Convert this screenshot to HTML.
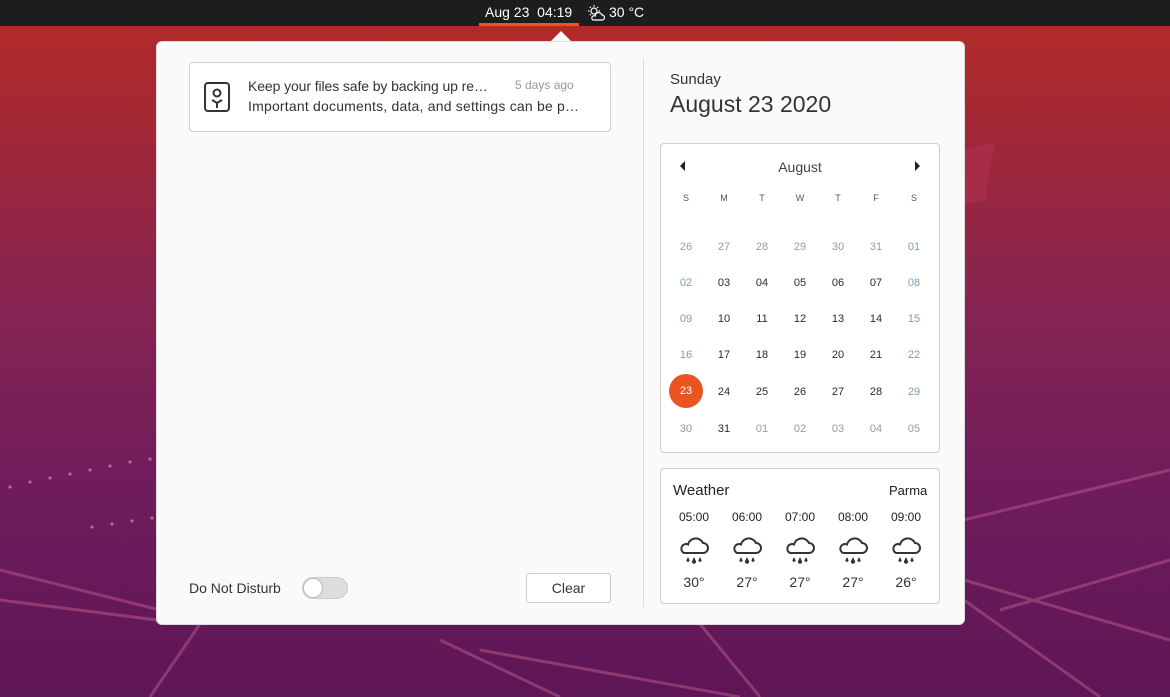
<!DOCTYPE html>
<html><head><meta charset="utf-8"><style>
*{margin:0;padding:0;box-sizing:border-box}
body{width:1170px;height:697px;overflow:hidden;position:relative;font-family:"Liberation Sans","DejaVu Sans",sans-serif;background:linear-gradient(180deg,#b52a25 0%,#a02837 20%,#852452 45%,#6f1c5c 70%,#5e1656 100%)}
.bar{position:absolute;left:0;top:0;width:1170px;height:26px;background:#1d1d1d;color:#fff;font-size:14px}
.abs{position:absolute}
.pop{position:absolute;left:157px;top:42px;width:807px;height:582px;background:#fafafa;border-radius:5px;box-shadow:0 0 0 1px #ddd}
.arrow{position:absolute;left:549px;top:31px;width:0;height:0;border-left:12px solid transparent;border-right:12px solid transparent;border-bottom:12px solid #fafafa}
.card{position:absolute;background:#fff;border:1px solid #cfcfcf;border-radius:4px}
.d{position:absolute;width:30px;text-align:center;font-size:11px;color:#2a2a2a}
.o{color:#9a9a9a}.w{color:#7d9cb3}
</style></head><body>
<svg class="abs" style="left:0;top:0" width="1170" height="697">
<g stroke="#c05a8a" stroke-width="3" opacity="0.5" fill="none">
<path d="M0 570 L160 610 M0 600 L157 620 M964 520 L1170 470 M964 580 L1170 640 M964 600 L1100 697 M200 624 L150 697 M440 640 L560 697 M480 650 L740 697 M700 624 L760 697 M1000 610 L1170 560"/>
</g>
<path d="M964 150 L995 142 L985 200 L964 205Z" fill="#b03050" opacity="0.6"/>
<g fill="#d08ab0" opacity="0.7"><circle cx="10" cy="487" r="1.6"/><circle cx="30" cy="482" r="1.6"/><circle cx="50" cy="478" r="1.6"/><circle cx="70" cy="474" r="1.6"/><circle cx="90" cy="470" r="1.6"/><circle cx="110" cy="466" r="1.6"/><circle cx="130" cy="462" r="1.6"/><circle cx="150" cy="459" r="1.6"/><circle cx="92" cy="527" r="1.6"/><circle cx="112" cy="524" r="1.6"/><circle cx="132" cy="521" r="1.6"/><circle cx="152" cy="518" r="1.6"/></g>
</svg>
<div class="bar">
<span class="abs" style="left:485px;top:4px">Aug 23&nbsp; 04:19</span>
<div class="abs" style="left:479px;top:23px;width:100px;height:3px;background:#e95420"></div>
<svg class="abs" style="left:587px;top:4px" width="18" height="18" viewBox="0 0 18 18" fill="none" stroke="#fff" stroke-width="1.2"><circle cx="7" cy="7" r="3"/><path d="M7 1v1.5M7 11.5V13M1 7h1.5M11.5 7H13M2.8 2.8l1 1M10.2 10.2l1 1M2.8 11.2l1-1M10.2 3.8l1-1"/><path d="M6 16h9a2.5 2.5 0 0 0 0-5 3.5 3.5 0 0 0-6.8 1A2 2 0 0 0 6 16z" fill="#1d1d1d"/></svg>
<span class="abs" style="left:609px;top:4px">30 °C</span>
</div>
<div class="arrow"></div>
<div class="pop">
<div class="card" style="left:32px;top:20px;width:422px;height:70px">
<svg class="abs" style="left:13px;top:18px" width="28" height="32" viewBox="0 0 28 32" fill="none" stroke="#333" stroke-width="2"><rect x="2" y="2" width="24" height="28" rx="3"/><circle cx="14" cy="12" r="3.5"/><path d="M9 19l5 3 5-3M14 22v5"/></svg>
<div class="abs" style="left:58px;top:15px;font-size:14px;color:#333;letter-spacing:-0.1px">Keep your files safe by backing up re…</div>
<div class="abs" style="left:325px;top:15px;font-size:12px;color:#999">5 days ago</div>
<div class="abs" style="left:58px;top:35px;font-size:14px;color:#333;letter-spacing:0.2px">Important documents, data, and settings can be p…</div>
</div>
<div class="abs" style="left:486px;top:16px;width:1px;height:549px;background:#ddd"></div>
<div class="abs" style="left:32px;top:538px;font-size:14px;color:#333">Do Not Disturb</div>
<div class="abs" style="left:145px;top:535px;width:46px;height:22px;border-radius:11px;background:#ddd;border:1px solid #ccc"><div style="position:absolute;left:0;top:0;width:20px;height:20px;border-radius:50%;background:#fff;border:1px solid #bbb"></div></div>
<div class="abs" style="left:369px;top:531px;width:85px;height:30px;border:1px solid #ccc;border-radius:3px;background:#fff;font-size:14px;color:#333;text-align:center;line-height:28px">Clear</div>
<div class="abs" style="left:513px;top:29px;font-size:15px;color:#333">Sunday</div>
<div class="abs" style="left:513px;top:49px;font-size:23px;color:#333">August 23 2020</div>
</div>
<div class="card" style="left:660px;top:143px;width:280px;height:310px">
<div class="abs" style="left:19px;top:17px;width:0;height:0;border-top:5px solid transparent;border-bottom:5px solid transparent;border-right:5px solid #222"></div>
<div class="abs" style="left:254px;top:17px;width:0;height:0;border-top:5px solid transparent;border-bottom:5px solid transparent;border-left:5px solid #222"></div>
<div class="abs" style="left:0;top:15px;width:278px;text-align:center;font-size:14px;color:#444">August</div>
</div>
<div id="cal"></div>
<div class="card" style="left:660px;top:468px;width:280px;height:136px">
<div class="abs" style="left:12px;top:13px;font-size:15px;color:#222">Weather</div>
<div class="abs" style="left:228px;top:14px;font-size:13px;color:#222">Parma</div>
</div>
<div id="wx"></div>
<script>
var xs=[686,724,762,800,838,876,914],h='';
'SMTWTFS'.split('').forEach(function(c,i){h+='<div class="d" style="left:'+(xs[i]-15)+'px;top:193px;font-size:9px;color:#555">'+c+'</div>'});
var rows=[[26,27,28,29,30,31,1],[2,3,4,5,6,7,8],[9,10,11,12,13,14,15],[16,17,18,19,20,21,22],[23,24,25,26,27,28,29],[30,31,1,2,3,4,5]],ys=[246,282,318,354,391,428];
rows.forEach(function(r,ri){r.forEach(function(n,i){var other=(ri==0&&i<6)||(ri==5&&i>1);var c=other?'o':((i==0||i==6)?'w':'');var s=(n<10?'0':'')+n;
if(ri==4&&i==0){h+='<div class="abs" style="left:669px;top:374px;width:34px;height:34px;border-radius:50%;background:#e95420;color:#fff;font-size:11px;text-align:center;line-height:34px">23</div>';return}
h+='<div class="d '+c+'" style="left:'+(xs[i]-15)+'px;top:'+(ys[ri]-5)+'px">'+s+'</div>'})});
document.getElementById('cal').innerHTML=h;
var wx=['05:00','06:00','07:00','08:00','09:00'],t=['30°','27°','27°','27°','26°'],cx=[694,747,800,853,906],g='';
wx.forEach(function(w,i){var x=cx[i];g+='<div class="abs" style="left:'+(x-25)+'px;top:510px;width:50px;text-align:center;font-size:12px;color:#222">'+w+'</div>';
g+='<svg class="abs" style="left:'+(x-15)+'px;top:534px" width="30" height="34" viewBox="0 0 30 34"><path d="M5 19h19a5 5 0 0 0 0-10 8 8 0 0 0-15 1.5A4.3 4.3 0 0 0 5 19z" fill="none" stroke="#333" stroke-width="2"/><path d="M9 23l1.6 3.2a1.6 1.6 0 0 1-3.2 0zM15 23l2.2 4.6a2.2 2.2 0 0 1-4.4 0zM21 23l1.6 3.2a1.6 1.6 0 0 1-3.2 0z" fill="#333"/></svg>';
g+='<div class="abs" style="left:'+(x-25)+'px;top:574px;width:50px;text-align:center;font-size:14px;color:#333">'+t[i]+'</div>'});
document.getElementById('wx').innerHTML=g;
</script>
</body></html>
